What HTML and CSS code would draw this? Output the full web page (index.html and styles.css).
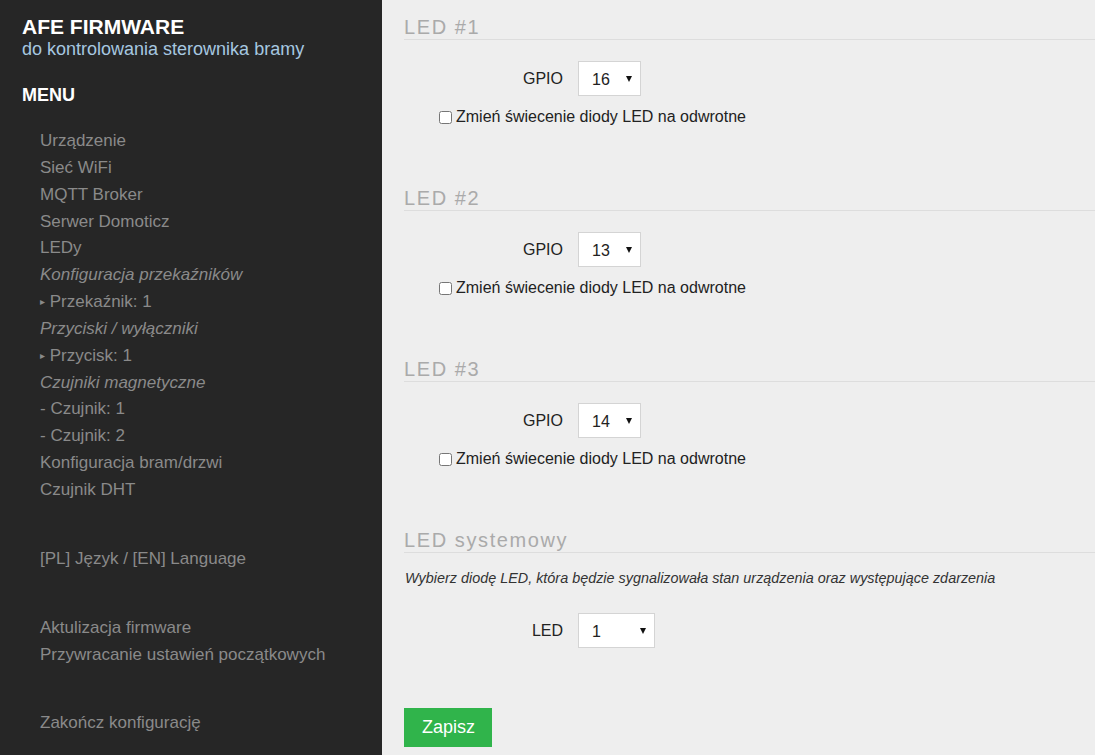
FILE: index.html
```html
<!DOCTYPE html>
<html lang="pl">
<head>
    <meta charset="UTF-8">
    <meta name="viewport" content="width=device-width, initial-scale=1.0">
    <title>AFE Firmware - LEDy</title>
    <link rel="stylesheet" href="styles.css">
</head>
<body>

    <div class="sidebar">
        <div class="logo">AFE FIRMWARE</div>
        <div class="logo-sub">do kontrolowania sterownika bramy</div>

        <div class="menu-title">MENU</div>

        <ul class="menu">
            <li><a href="#">Urządzenie</a></li>
            <li><a href="#">Sieć WiFi</a></li>
            <li><a href="#">MQTT Broker</a></li>
            <li><a href="#">Serwer Domoticz</a></li>
            <li><a href="#">LEDy</a></li>
            <li class="group">Konfiguracja przekaźników</li>
            <li><a href="#"><span class="tri">&#9656;</span> Przekaźnik: 1</a></li>
            <li class="group">Przyciski / wyłączniki</li>
            <li><a href="#"><span class="tri">&#9656;</span> Przycisk: 1</a></li>
            <li class="group">Czujniki magnetyczne</li>
            <li><a href="#">- Czujnik: 1</a></li>
            <li><a href="#">- Czujnik: 2</a></li>
            <li><a href="#">Konfiguracja bram/drzwi</a></li>
            <li><a href="#">Czujnik DHT</a></li>
        </ul>

        <ul class="menu">
            <li><a href="#">[PL] Język / [EN] Language</a></li>
        </ul>

        <ul class="menu">
            <li><a href="#">Aktulizacja firmware</a></li>
            <li><a href="#">Przywracanie ustawień początkowych</a></li>
        </ul>

        <ul class="menu">
            <li><a href="#">Zakończ konfigurację</a></li>
        </ul>
    </div>

    <form class="content" action="/" method="post">

        <div class="section">
            <h3>LED #1</h3>
            <div class="field">
                <label for="led0">GPIO</label>
                <span class="select">
                    <select name="led0" id="led0">
                        <option>16</option>
                    </select>
                </span>
            </div>
            <div class="check">
                <input type="checkbox" name="led0r" id="led0r">
                <label for="led0r">Zmień świecenie diody LED na odwrotne</label>
            </div>
        </div>

        <div class="section">
            <h3>LED #2</h3>
            <div class="field">
                <label for="led1">GPIO</label>
                <span class="select">
                    <select name="led1" id="led1">
                        <option>13</option>
                    </select>
                </span>
            </div>
            <div class="check">
                <input type="checkbox" name="led1r" id="led1r">
                <label for="led1r">Zmień świecenie diody LED na odwrotne</label>
            </div>
        </div>

        <div class="section">
            <h3>LED #3</h3>
            <div class="field">
                <label for="led2">GPIO</label>
                <span class="select">
                    <select name="led2" id="led2">
                        <option>14</option>
                    </select>
                </span>
            </div>
            <div class="check">
                <input type="checkbox" name="led2r" id="led2r">
                <label for="led2r">Zmień świecenie diody LED na odwrotne</label>
            </div>
        </div>

        <div class="section">
            <h3>LED systemowy</h3>
            <p class="hint">Wybierz diodę LED, która będzie sygnalizowała stan urządzenia oraz występujące zdarzenia</p>
            <div class="field field-sys">
                <label for="sysled">LED</label>
                <span class="select select-wide">
                    <select name="sysled" id="sysled">
                        <option>1</option>
                    </select>
                </span>
            </div>
        </div>

        <button type="submit" class="save">Zapisz</button>
    </form>

</body>
</html>
```

FILE: styles.css
```css
body{
    margin:0;
    display:flex;
    min-height:100vh;
    background-color:#eeeeee;
    font-family:"Liberation Sans", Arial, sans-serif;
    color:#222;
}

/* lewa kolumna */
.sidebar{
    width:382px;
    flex-shrink:0;
    box-sizing:border-box;
    background-color:#262626;
    padding:16px 0 0 22px;
}

.logo{
    color:#fff;
    font-weight:bold;
    font-size:21px;
    line-height:22px;
}

.logo-sub{
    color:#a6c8e0;
    font-size:18px;
    line-height:22px;
}

.menu-title{
    color:#fff;
    font-weight:bold;
    font-size:18px;
    line-height:22px;
    margin-top:24px;
}

.menu{
    list-style:none;
    margin:42px 0 0 0;
    padding:0 0 0 18px;
    font-size:17px;
    line-height:26.85px;
}

.menu-title + .menu{
    margin-top:22px;
}

.menu li{
    color:#8a8a8a;
}

.menu a{
    color:#8a8a8a;
    text-decoration:none;
}

.menu .group{
    font-style:italic;
}

.tri{
    font-size:10px;
    vertical-align:2px;
}

/* prawa kolumna */
.content{
    flex:1;
    padding:16px 0 0 22px;
}

.section{
    margin-bottom:60px;
}

.section h3{
    margin:0;
    font-size:20px;
    line-height:23px;
    font-weight:normal;
    letter-spacing:1.6px;
    color:#aaaaaa;
    border-bottom:1px solid #dddddd;
}

.field{
    display:flex;
    align-items:center;
    margin-top:21px;
}

.field label{
    width:159px;
    margin-right:15px;
    text-align:right;
    font-size:16px;
    line-height:18px;
}

.select{
    position:relative;
    display:inline-block;
}

.select select{
    -webkit-appearance:none;
    appearance:none;
    width:63px;
    height:35px;
    box-sizing:border-box;
    padding:2px 0 0 13px;
    border:1px solid #d4d4d4;
    border-radius:0;
    background-color:#fff;
    font-family:"Liberation Sans", Arial, sans-serif;
    font-size:16px;
    color:#222;
}

.select-wide select{
    width:77px;
}

.select::after{
    content:"";
    position:absolute;
    right:9px;
    top:15px;
    border-left:3.5px solid transparent;
    border-right:3.5px solid transparent;
    border-top:6px solid #111;
    pointer-events:none;
}

.check{
    display:flex;
    align-items:center;
    margin-top:11px;
    padding-left:35px;
    font-size:16px;
    line-height:20px;
}

.check input{
    margin:0 4px 0 0;
    width:13px;
    height:13px;
}

.hint{
    margin:17px 0 0 1px;
    font-style:italic;
    font-size:14.4px;
    line-height:17px;
    color:#333;
}

.field-sys{
    margin-top:26px;
}

.save{
    display:block;
    margin-top:1px;
    height:39px;
    padding:0 17px 0 18px;
    border:none;
    background-color:#30b44b;
    color:#fff;
    font-family:"Liberation Sans", Arial, sans-serif;
    font-size:18px;
}
```
